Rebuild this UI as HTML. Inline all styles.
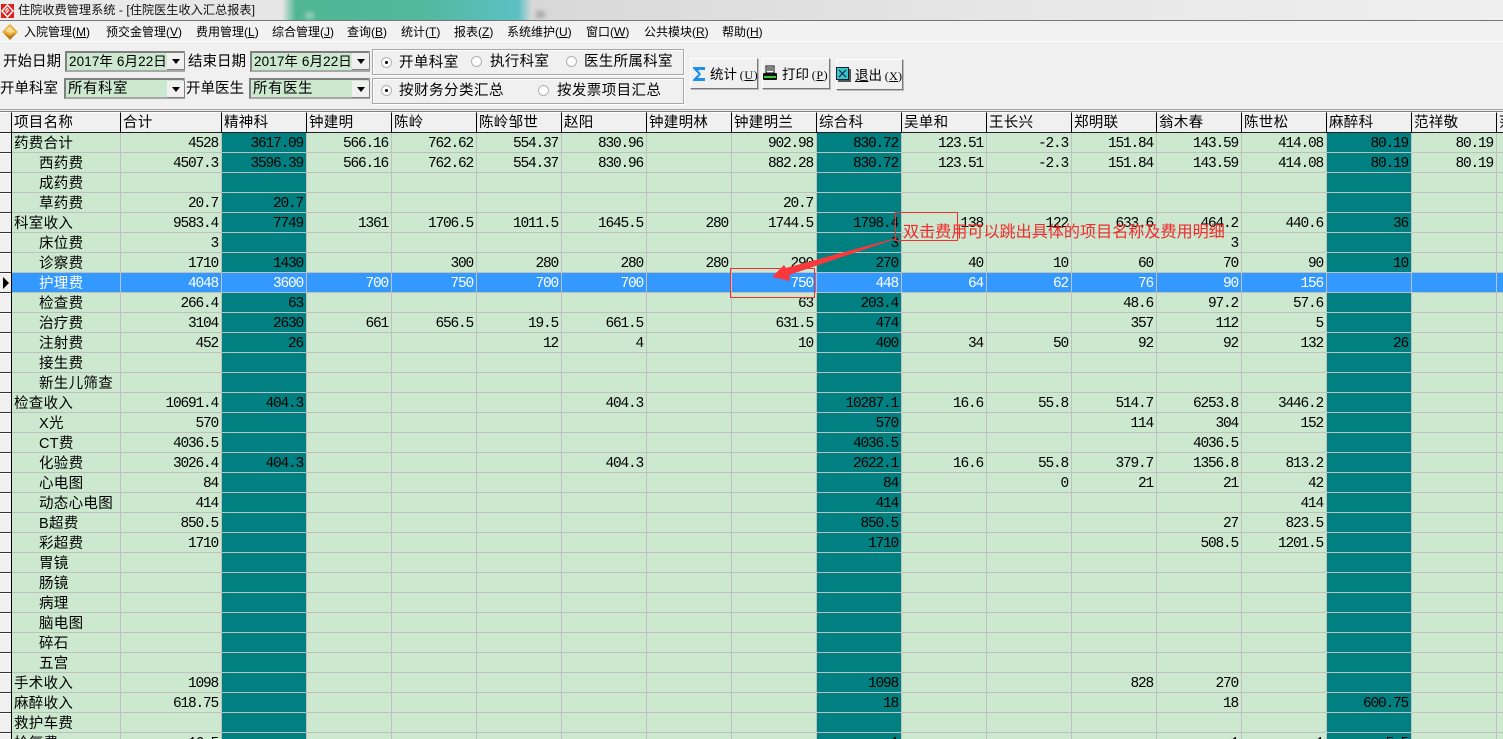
<!DOCTYPE html>
<html lang="zh"><head><meta charset="utf-8"><title>住院收费管理系统</title>
<style>
html,body{margin:0;padding:0;width:1503px;height:739px;overflow:hidden;background:#f0f0f0}
body{position:relative;font-family:"Liberation Sans","Noto Sans CJK SC",sans-serif;color:#000}
.t{position:absolute;white-space:nowrap;line-height:20px;font-size:14.5px}
.a{position:absolute;box-sizing:border-box}
#title{left:0;top:0;width:1503px;height:21px;background:linear-gradient(90deg,#ececec 0,#e6e6e6 282px,#4fb592 296px,#52b89c 420px,#5cc0c4 518px,#d8d8d8 532px,#e6e6e6 1000px,#efefef 1503px);border-bottom:1px solid #7a7a7a}
#menu{left:0;top:22px;width:1503px;height:20px;background:#f2f2f2;border-bottom:1px solid #fff}
.m{position:absolute;top:22px;line-height:20px;font-size:12px;white-space:nowrap}
.box{background:#cce8cf;border:2px solid #808080;border-right-color:#a8a8a8;border-bottom-color:#a8a8a8;height:21px}
.dd{position:absolute;background:#f0f0f0;border-right:1px solid #808080;border-bottom:1px solid #808080;width:17px;height:16px}
.dd:after{content:"";position:absolute;left:5px;top:6px;border:4px solid transparent;border-top:5px solid #000;border-bottom:0}
.grp{border:1px solid #a8a8a8;box-shadow:1px 1px 0 #fff,inset 1px 1px 0 #fff}
.r{position:absolute;width:11px;height:11px;border-radius:50%;background:#fff;border:1px solid #b0b0b0;box-sizing:border-box}
.r.on:after{content:"";position:absolute;left:3px;top:3px;width:3px;height:3px;border-radius:50%;background:#000}
.btn{background:#f0f0f0;border:1px solid;border-color:#fff #777 #777 #fff;box-shadow:1px 1px 0 #bbb}
#g{position:absolute;left:0;top:112px;border-collapse:separate;border-spacing:0;table-layout:fixed;width:1582px}
#wrap{position:absolute;left:0;top:0;width:1503px;height:739px;overflow:hidden}
#g td,#g th{box-sizing:border-box;height:20px;padding:0;overflow:hidden;white-space:nowrap}
#g td{background:#cce8cf;border-right:1px solid #c0c0c0;border-bottom:1px solid #c0c0c0;text-align:right;padding:4px 3px 0 0;font:14.5px/15px "Liberation Mono",monospace;letter-spacing:-1.2px}
#g tbody th{background:#f0f0f0;border-right:1px solid #000;border-bottom:1px solid #333;box-shadow:inset 0 1px 0 #fff}
#g tbody td:nth-child(2){text-align:left;padding:4px 0 0 2px;font:14.5px/15px "Liberation Sans","Noto Sans CJK SC",sans-serif;letter-spacing:.3px}
#g tbody td.i:nth-child(2){padding-left:27px}
#g tbody td:nth-child(4),#g tbody td:nth-child(11),#g tbody td:nth-child(17){background:#008080}
#g tr.s td,#g tr.s td:nth-child(2),#g tr.s td:nth-child(4),#g tr.s td:nth-child(11),#g tr.s td:nth-child(17){background:#3399ff;color:#fff}
#g thead th{height:21px;background:#f0f0f0;border-right:1px solid #000;border-bottom:1px solid #222;border-top:1px solid #fff;text-align:left;padding:2px 0 0 2px;font-weight:400;font-size:14.5px;line-height:17px;letter-spacing:.3px;font-family:"Liberation Sans","Noto Sans CJK SC",sans-serif}
#arrow{position:absolute;left:0;top:0;width:1503px;height:739px}
</style></head><body>
<div id="wrap">
<div class="a" id="title"></div>
<svg class="a" style="left:1px;top:4px" width="13" height="14" viewBox="0 0 13 14"><rect width="13" height="14" fill="#e0211c"/><path d="M6.500 1L12 7 6.500 13 1 7Z" fill="none" stroke="#fff" stroke-width="1.500"/><path d="M4 7l3-3M5 9l3-3" stroke="#fff" stroke-width="1.300"/></svg>
<div class="t" style="left:18px;top:0;font-size:12.200px;color:#111">住院收费管理系统 - [住院医生收入汇总报表]</div>
<div class="a" style="left:305px;top:12px;width:9px;height:7px;background:#8fcfb8;filter:blur(2px)"></div>
<div class="a" style="left:536px;top:11px;width:9px;height:7px;background:#aaa;filter:blur(2px)"></div>
<div class="a" id="menu"></div>
<svg class="a" style="left:1px;top:23px" width="18" height="18" viewBox="0 0 18 18"><path d="M9 1L17 9 9 17 1 9Z" fill="#e8ad3c"/><path d="M9 3L14 9 9 10 4 8Z" fill="#f9dc8e"/><path d="M3 10L9 17 15 10 9 13Z" fill="#b87a1c"/></svg>
<div class="m" style="left:24px">入院管理(<u>M</u>)</div>
<div class="m" style="left:106px">预交金管理(<u>V</u>)</div>
<div class="m" style="left:196px">费用管理(<u>L</u>)</div>
<div class="m" style="left:272px">综合管理(<u>J</u>)</div>
<div class="m" style="left:347px">查询(<u>B</u>)</div>
<div class="m" style="left:401px">统计(<u>T</u>)</div>
<div class="m" style="left:454px">报表(<u>Z</u>)</div>
<div class="m" style="left:507px">系统维护(<u>U</u>)</div>
<div class="m" style="left:586px">窗口(<u>W</u>)</div>
<div class="m" style="left:644px">公共模块(<u>R</u>)</div>
<div class="m" style="left:722px">帮助(<u>H</u>)</div>

<div class="t" style="left:3px;top:52px">开始日期</div>
<div class="a box" style="left:65px;top:51px;width:120px"></div>
<div class="t" style="left:69px;top:52px;font-size:13.500px;letter-spacing:.1px">2017年 6月22日</div>
<div class="dd" style="left:167px;top:53px"></div>
<div class="t" style="left:188px;top:52px">结束日期</div>
<div class="a box" style="left:250px;top:51px;width:120px"></div>
<div class="t" style="left:254px;top:52px;font-size:13.500px;letter-spacing:.1px">2017年 6月22日</div>
<div class="dd" style="left:352px;top:53px"></div>

<div class="t" style="left:0;top:79px">开单科室</div>
<div class="a box" style="left:64px;top:78px;width:121px"></div>
<div class="t" style="left:68px;top:79px;letter-spacing:.5px">所有科室</div>
<div class="dd" style="left:167px;top:81px"></div>
<div class="t" style="left:186px;top:79px">开单医生</div>
<div class="a box" style="left:249px;top:78px;width:121px"></div>
<div class="t" style="left:253px;top:79px;letter-spacing:.5px">所有医生</div>
<div class="dd" style="left:352px;top:81px"></div>

<div class="a grp" style="left:372px;top:49px;width:312px;height:26px"></div>
<div class="r on" style="left:381px;top:57px"></div><div class="t" style="left:399px;top:53px;letter-spacing:.4px">开单科室</div>
<div class="r" style="left:471px;top:56px"></div><div class="t" style="left:490px;top:52px;letter-spacing:.3px">执行科室</div>
<div class="r" style="left:566px;top:56px"></div><div class="t" style="left:584px;top:52px;letter-spacing:.3px">医生所属科室</div>
<div class="a grp" style="left:372px;top:78px;width:312px;height:26px"></div>
<div class="r on" style="left:381px;top:85px"></div><div class="t" style="left:399px;top:81px;letter-spacing:.5px">按财务分类汇总</div>
<div class="r" style="left:538px;top:85px"></div><div class="t" style="left:557px;top:81px;letter-spacing:.4px">按发票项目汇总</div>

<div class="a btn" style="left:690px;top:58px;width:68px;height:31px"></div>
<svg class="a" style="left:691px;top:66px" width="16" height="16" viewBox="0 0 16 16"><path d="M14 4V1H2v1.500L7.500 8 2 13.500V15h12v-3H7l3-4-3-4Z" fill="#1e90e6"/></svg>
<div class="t" style="left:710px;top:65px;font-size:13.500px">统计 <span style="font-size:12px;font-family:'Liberation Serif',serif;margin-left:-1px;letter-spacing:.6px">(<u>U</u>)</span></div>
<div class="a btn" style="left:762px;top:58px;width:68px;height:31px"></div>
<svg class="a" style="left:762px;top:65px" width="16" height="17" viewBox="0 0 16 17"><rect x="4" y="1" width="8" height="7" fill="#fff" stroke="#000"/><path d="M5 3h6M5 5h6" stroke="#000"/><rect x="1" y="8" width="14" height="7" rx="1" fill="#111"/><rect x="2" y="11" width="12" height="2" fill="#3ccb3c"/></svg>
<div class="t" style="left:782px;top:65px;font-size:13.500px">打印 <span style="font-size:12px;font-family:'Liberation Serif',serif;margin-left:-1px;letter-spacing:.6px">(<u>P</u>)</span></div>
<div class="a btn" style="left:836px;top:59px;width:67px;height:31px"></div>
<svg class="a" style="left:836px;top:67px" width="15" height="15" viewBox="0 0 15 15"><rect x="2" y="2" width="13" height="13" fill="#555"/><rect x="0.500" y="0.500" width="12" height="12" fill="#35c6cf" stroke="#123"/><path d="M3 3l7 7M10 3l-7 7" stroke="#123" stroke-width="1.200"/></svg>
<div class="t" style="left:855px;top:66px;font-size:13.500px"><u>退</u>出 <span style="font-size:12px;font-family:'Liberation Serif',serif;margin-left:-1px;letter-spacing:.3px">(<u>X</u>)</span></div>

<div class="a" style="left:0;top:109px;width:1503px;height:3px;background:#f0f0f0;border-top:1px solid #a0a0a0;border-bottom:1px solid #808080"></div>

<table id="g"><colgroup><col style="width:12px"><col style="width:109px"><col style="width:101px"><col style="width:85px"><col style="width:85px"><col style="width:85px"><col style="width:85px"><col style="width:85px"><col style="width:85px"><col style="width:85px"><col style="width:85px"><col style="width:85px"><col style="width:85px"><col style="width:85px"><col style="width:85px"><col style="width:85px"><col style="width:85px"><col style="width:85px"><col style="width:85px"></colgroup>
<thead><tr><th></th><th>项目名称</th><th>合计</th><th>精神科</th><th>钟建明</th><th>陈岭</th><th>陈岭邹世</th><th>赵阳</th><th>钟建明林</th><th>钟建明兰</th><th>综合科</th><th>吴单和</th><th>王长兴</th><th>郑明联</th><th>翁木春</th><th>陈世松</th><th>麻醉科</th><th>范祥敬</th><th>范</th></tr></thead>
<tbody>
<tr><th></th><td>药费合计</td><td>4528</td><td>3617.09</td><td>566.16</td><td>762.62</td><td>554.37</td><td>830.96</td><td></td><td>902.98</td><td>830.72</td><td>123.51</td><td>-2.3</td><td>151.84</td><td>143.59</td><td>414.08</td><td>80.19</td><td>80.19</td><td></td></tr>
<tr><th></th><td class="i">西药费</td><td>4507.3</td><td>3596.39</td><td>566.16</td><td>762.62</td><td>554.37</td><td>830.96</td><td></td><td>882.28</td><td>830.72</td><td>123.51</td><td>-2.3</td><td>151.84</td><td>143.59</td><td>414.08</td><td>80.19</td><td>80.19</td><td></td></tr>
<tr><th></th><td class="i">成药费</td><td></td><td></td><td></td><td></td><td></td><td></td><td></td><td></td><td></td><td></td><td></td><td></td><td></td><td></td><td></td><td></td><td></td></tr>
<tr><th></th><td class="i">草药费</td><td>20.7</td><td>20.7</td><td></td><td></td><td></td><td></td><td></td><td>20.7</td><td></td><td></td><td></td><td></td><td></td><td></td><td></td><td></td><td></td></tr>
<tr><th></th><td>科室收入</td><td>9583.4</td><td>7749</td><td>1361</td><td>1706.5</td><td>1011.5</td><td>1645.5</td><td>280</td><td>1744.5</td><td>1798.4</td><td>138</td><td>122</td><td>633.6</td><td>464.2</td><td>440.6</td><td>36</td><td></td><td></td></tr>
<tr><th></th><td class="i">床位费</td><td>3</td><td></td><td></td><td></td><td></td><td></td><td></td><td></td><td>3</td><td></td><td></td><td></td><td>3</td><td></td><td></td><td></td><td></td></tr>
<tr><th></th><td class="i">诊察费</td><td>1710</td><td>1430</td><td></td><td>300</td><td>280</td><td>280</td><td>280</td><td>290</td><td>270</td><td>40</td><td>10</td><td>60</td><td>70</td><td>90</td><td>10</td><td></td><td></td></tr>
<tr class="s"><th></th><td class="i">护理费</td><td>4048</td><td>3600</td><td>700</td><td>750</td><td>700</td><td>700</td><td></td><td>750</td><td>448</td><td>64</td><td>62</td><td>76</td><td>90</td><td>156</td><td></td><td></td><td></td></tr>
<tr><th></th><td class="i">检查费</td><td>266.4</td><td>63</td><td></td><td></td><td></td><td></td><td></td><td>63</td><td>203.4</td><td></td><td></td><td>48.6</td><td>97.2</td><td>57.6</td><td></td><td></td><td></td></tr>
<tr><th></th><td class="i">治疗费</td><td>3104</td><td>2630</td><td>661</td><td>656.5</td><td>19.5</td><td>661.5</td><td></td><td>631.5</td><td>474</td><td></td><td></td><td>357</td><td>112</td><td>5</td><td></td><td></td><td></td></tr>
<tr><th></th><td class="i">注射费</td><td>452</td><td>26</td><td></td><td></td><td>12</td><td>4</td><td></td><td>10</td><td>400</td><td>34</td><td>50</td><td>92</td><td>92</td><td>132</td><td>26</td><td></td><td></td></tr>
<tr><th></th><td class="i">接生费</td><td></td><td></td><td></td><td></td><td></td><td></td><td></td><td></td><td></td><td></td><td></td><td></td><td></td><td></td><td></td><td></td><td></td></tr>
<tr><th></th><td class="i">新生儿筛查</td><td></td><td></td><td></td><td></td><td></td><td></td><td></td><td></td><td></td><td></td><td></td><td></td><td></td><td></td><td></td><td></td><td></td></tr>
<tr><th></th><td>检查收入</td><td>10691.4</td><td>404.3</td><td></td><td></td><td></td><td>404.3</td><td></td><td></td><td>10287.1</td><td>16.6</td><td>55.8</td><td>514.7</td><td>6253.8</td><td>3446.2</td><td></td><td></td><td></td></tr>
<tr><th></th><td class="i">X光</td><td>570</td><td></td><td></td><td></td><td></td><td></td><td></td><td></td><td>570</td><td></td><td></td><td>114</td><td>304</td><td>152</td><td></td><td></td><td></td></tr>
<tr><th></th><td class="i">CT费</td><td>4036.5</td><td></td><td></td><td></td><td></td><td></td><td></td><td></td><td>4036.5</td><td></td><td></td><td></td><td>4036.5</td><td></td><td></td><td></td><td></td></tr>
<tr><th></th><td class="i">化验费</td><td>3026.4</td><td>404.3</td><td></td><td></td><td></td><td>404.3</td><td></td><td></td><td>2622.1</td><td>16.6</td><td>55.8</td><td>379.7</td><td>1356.8</td><td>813.2</td><td></td><td></td><td></td></tr>
<tr><th></th><td class="i">心电图</td><td>84</td><td></td><td></td><td></td><td></td><td></td><td></td><td></td><td>84</td><td></td><td>0</td><td>21</td><td>21</td><td>42</td><td></td><td></td><td></td></tr>
<tr><th></th><td class="i">动态心电图</td><td>414</td><td></td><td></td><td></td><td></td><td></td><td></td><td></td><td>414</td><td></td><td></td><td></td><td></td><td>414</td><td></td><td></td><td></td></tr>
<tr><th></th><td class="i">B超费</td><td>850.5</td><td></td><td></td><td></td><td></td><td></td><td></td><td></td><td>850.5</td><td></td><td></td><td></td><td>27</td><td>823.5</td><td></td><td></td><td></td></tr>
<tr><th></th><td class="i">彩超费</td><td>1710</td><td></td><td></td><td></td><td></td><td></td><td></td><td></td><td>1710</td><td></td><td></td><td></td><td>508.5</td><td>1201.5</td><td></td><td></td><td></td></tr>
<tr><th></th><td class="i">胃镜</td><td></td><td></td><td></td><td></td><td></td><td></td><td></td><td></td><td></td><td></td><td></td><td></td><td></td><td></td><td></td><td></td><td></td></tr>
<tr><th></th><td class="i">肠镜</td><td></td><td></td><td></td><td></td><td></td><td></td><td></td><td></td><td></td><td></td><td></td><td></td><td></td><td></td><td></td><td></td><td></td></tr>
<tr><th></th><td class="i">病理</td><td></td><td></td><td></td><td></td><td></td><td></td><td></td><td></td><td></td><td></td><td></td><td></td><td></td><td></td><td></td><td></td><td></td></tr>
<tr><th></th><td class="i">脑电图</td><td></td><td></td><td></td><td></td><td></td><td></td><td></td><td></td><td></td><td></td><td></td><td></td><td></td><td></td><td></td><td></td><td></td></tr>
<tr><th></th><td class="i">碎石</td><td></td><td></td><td></td><td></td><td></td><td></td><td></td><td></td><td></td><td></td><td></td><td></td><td></td><td></td><td></td><td></td><td></td></tr>
<tr><th></th><td class="i">五宫</td><td></td><td></td><td></td><td></td><td></td><td></td><td></td><td></td><td></td><td></td><td></td><td></td><td></td><td></td><td></td><td></td><td></td></tr>
<tr><th></th><td>手术收入</td><td>1098</td><td></td><td></td><td></td><td></td><td></td><td></td><td></td><td>1098</td><td></td><td></td><td>828</td><td>270</td><td></td><td></td><td></td><td></td></tr>
<tr><th></th><td>麻醉收入</td><td>618.75</td><td></td><td></td><td></td><td></td><td></td><td></td><td></td><td>18</td><td></td><td></td><td></td><td>18</td><td></td><td>600.75</td><td></td><td></td></tr>
<tr><th></th><td>救护车费</td><td></td><td></td><td></td><td></td><td></td><td></td><td></td><td></td><td></td><td></td><td></td><td></td><td></td><td></td><td></td><td></td><td></td></tr>
<tr><th></th><td>抢氧费</td><td>16.5</td><td></td><td></td><td></td><td></td><td></td><td></td><td></td><td>1</td><td></td><td></td><td></td><td>1</td><td>1</td><td>5.5</td><td></td><td></td></tr>
</tbody></table>

<div class="a" style="left:3px;top:277px;width:0;height:0;border-left:6px solid #000;border-top:6px solid transparent;border-bottom:6px solid transparent"></div>

<svg id="arrow" viewBox="0 0 1503 739">
<rect x="895.500" y="212.500" width="62" height="28" fill="none" stroke="#f23030" stroke-width="1"/>
<rect x="730.500" y="268.500" width="84" height="29" fill="none" stroke="#f23030" stroke-width="1"/>
<path d="M772 277L784 265 786 268 907 235 789 275 790 281Z" fill="#f8383a"/>
</svg>
<div class="t" style="left:903px;top:222px;font-size:16.100px;color:#f22a2a">双击费用可以跳出具体的项目名称及费用明细</div>
</div>
</body></html>
